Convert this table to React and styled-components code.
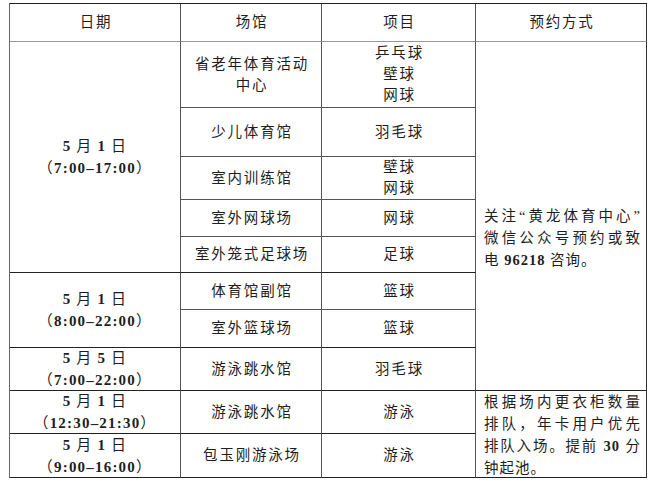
import React from 'react';
import styled, { createGlobalStyle } from 'styled-components';

const GlobalStyle = createGlobalStyle`
  html, body {
    margin: 0;
    padding: 0;
    background: #fff;
  }
  body {
    padding: 3px 0 0 9px;
    font-family: "Liberation Serif", "Noto Sans CJK SC", serif;
    color: #1e1e1e;
  }
`;

const Table = styled.div`
  display: grid;
  grid-template-columns: 171px 141px 154px 171px;
  grid-template-rows: 38px 66px 49px 43px 37px 36px 37px 38px 43px 43px 44px;
  width: max-content;
  border-top: 1px solid #222;
  border-left: 1px solid #666;
`;

const Cell = styled.div`
  grid-column: ${(p) => p.$col};
  grid-row: ${(p) => p.$row} / span ${(p) => p.$span || 1};
  display: flex;
  flex-direction: column;
  align-items: center;
  justify-content: center;
  text-align: center;
  border-right: 1px solid ${(p) => (p.$col === 4 ? '#333' : '#555')};
  border-bottom: 1px solid ${(p) => (p.$head ? '#999' : p.$strong ? '#222' : '#555')};
  font-size: 14.5px;
  line-height: 21px;
  letter-spacing: 1.8px;
  padding-left: 2px;
`;

const DateCell = styled(Cell)`
  font-size: 15px;
  line-height: 22px;
  letter-spacing: 1.2px;
  padding-left: 0;
`;

const Note = styled.div`
  grid-column: 4;
  grid-row: ${(p) => p.$row} / span ${(p) => p.$span};
  display: flex;
  flex-direction: column;
  justify-content: ${(p) => (p.$top ? 'flex-start' : 'center')};
  padding: ${(p) => (p.$top ? '0 5px 0 8px' : '44px 5px 0 8px')};
  border-right: 1px solid #333;
  border-bottom: 1px solid #222;
  font-size: 14.5px;
  line-height: 22px;
  letter-spacing: 1px;
`;

const NoteLine = styled.span`
  display: block;
  text-align: ${(p) => (p.$last ? 'left' : 'justify')};
  text-align-last: ${(p) => (p.$last ? 'left' : 'justify')};
  white-space: nowrap;
`;

const Num = styled.span`
  font-weight: 600;
`;

const rows = [
  { row: 2, venue: ['省老年体育活动', '中心'], items: ['乒乓球', '壁球', '网球'] },
  { row: 3, venue: ['少儿体育馆'], items: ['羽毛球'] },
  { row: 4, venue: ['室内训练馆'], items: ['壁球', '网球'] },
  { row: 5, venue: ['室外网球场'], items: ['网球'] },
  { row: 6, venue: ['室外笼式足球场'], items: ['足球'], strong: true },
  { row: 7, venue: ['体育馆副馆'], items: ['篮球'] },
  { row: 8, venue: ['室外篮球场'], items: ['篮球'], strong: true },
  { row: 9, venue: ['游泳跳水馆'], items: ['羽毛球'], strong: true },
  { row: 10, venue: ['游泳跳水馆'], items: ['游泳'], strong: true },
  { row: 11, venue: ['包玉刚游泳场'], items: ['游泳'], strong: true },
];

const dates = [
  { row: 2, span: 5, month: '5', day: '1', time: '7:00–17:00' },
  { row: 7, span: 2, month: '5', day: '1', time: '8:00–22:00' },
  { row: 9, span: 1, month: '5', day: '5', time: '7:00–22:00' },
  { row: 10, span: 1, month: '5', day: '1', time: '12:30–21:30' },
  { row: 11, span: 1, month: '5', day: '1', time: '9:00–16:00' },
];

const Lines = ({ list }) => list.map((t) => <span key={t}>{t}</span>);

export default function App() {
  return (
    <>
      <GlobalStyle />
      <Table>
        <Cell $col={1} $row={1} $head>日期</Cell>
        <Cell $col={2} $row={1} $head>场馆</Cell>
        <Cell $col={3} $row={1} $head>项目</Cell>
        <Cell $col={4} $row={1} $head>预约方式</Cell>

        {dates.map((d) => (
          <DateCell key={d.row} $col={1} $row={d.row} $span={d.span} $strong>
            <span>
              <Num>{d.month}</Num> 月 <Num>{d.day}</Num> 日
            </span>
            <span>
              （<Num>{d.time}</Num>）
            </span>
          </DateCell>
        ))}

        {rows.map((r) => (
          <React.Fragment key={r.row}>
            <Cell $col={2} $row={r.row} $strong={r.strong}>
              <Lines list={r.venue} />
            </Cell>
            <Cell $col={3} $row={r.row} $strong={r.strong}>
              <Lines list={r.items} />
            </Cell>
          </React.Fragment>
        ))}

        <Note $row={2} $span={8}>
          <NoteLine>关注“黄龙体育中心”</NoteLine>
          <NoteLine>微信公众号预约或致</NoteLine>
          <NoteLine $last>电 <Num>96218</Num> 咨询。</NoteLine>
        </Note>
        <Note $row={10} $span={2} $top>
          <NoteLine>根据场内更衣柜数量</NoteLine>
          <NoteLine>排队，年卡用户优先</NoteLine>
          <NoteLine>排队入场。提前 <Num>30</Num> 分</NoteLine>
          <NoteLine $last>钟起池。</NoteLine>
        </Note>
      </Table>
    </>
  );
}
